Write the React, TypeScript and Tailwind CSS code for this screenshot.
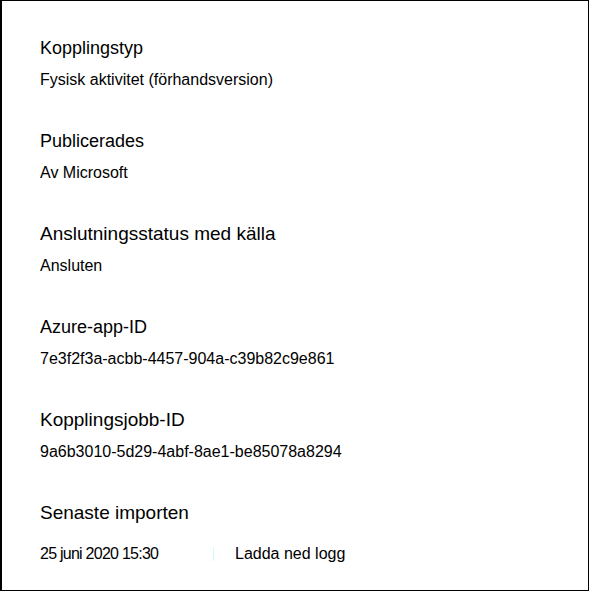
const font = { fontFamily: '"Liberation Sans", Arial, sans-serif' };

type Field = {
  label: string;
  value: string;
  labelSize: string;
};

const fields: Field[] = [
  { label: "Kopplingstyp", value: "Fysisk aktivitet (förhandsversion)", labelSize: "text-[18px]" },
  { label: "Publicerades", value: "Av Microsoft", labelSize: "text-[18px]" },
  { label: "Anslutningsstatus med källa", value: "Ansluten", labelSize: "text-[19px]" },
  { label: "Azure-app-ID", value: "7e3f2f3a-acbb-4457-904a-c39b82c9e861", labelSize: "text-[18px]" },
  { label: "Kopplingsjobb-ID", value: "9a6b3010-5d29-4abf-8ae1-be85078a8294", labelSize: "text-[19px]" },
];

export default function App() {
  return (
    <div
      className="h-[591px] w-[589px] border-t border-r border-b border-l-2 border-black bg-white text-black"
      style={font}>
      <div className="flex flex-col gap-[37px] pl-[38px] pt-[35px]">
        {fields.map((f) => (
          <div key={f.label} className="flex flex-col gap-2">
            <p className={`${f.labelSize} leading-6`}>{f.label}</p>
            <p className="text-[16px] leading-6">{f.value}</p>
          </div>
        ))}

        <div className="flex flex-col gap-[17px]">
          <p className="text-[19px] leading-6">Senaste importen</p>
          <div className="flex items-center">
            <span className="w-[173px] text-[16px] leading-6 tracking-[-0.75px]">
              25 juni 2020 15:30
            </span>
            <span className="h-[14px] w-px bg-cyan-100" />
            <button type="button" className="ml-[21px] text-[16px] leading-6">
              Ladda ned logg
            </button>
          </div>
        </div>
      </div>
    </div>
  );
}
